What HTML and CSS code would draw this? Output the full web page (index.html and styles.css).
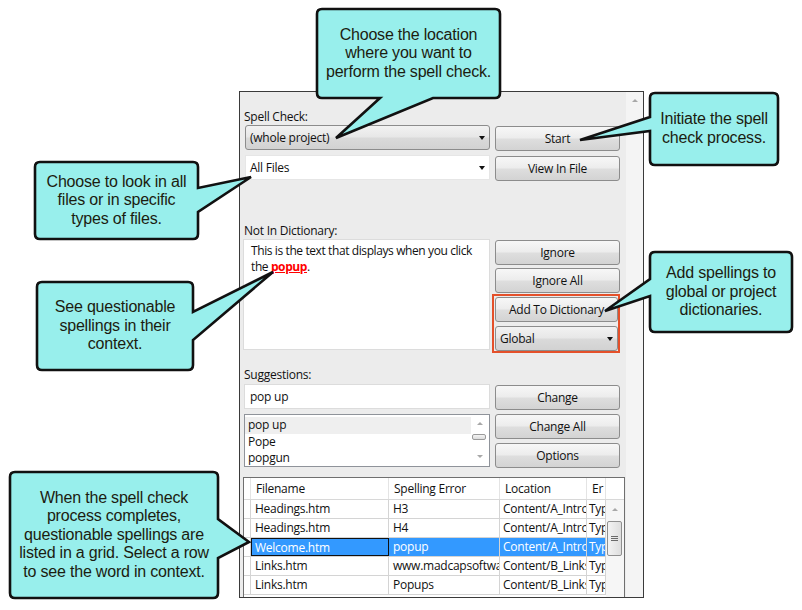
FILE: index.html
```html
<!DOCTYPE html>
<html>
<head>
<meta charset="utf-8">
<link rel="stylesheet" href="styles.css">
</head>
<body>
<div class="stage">
  <div class="panel">
    <div class="content">
      <div class="label first">Spell Check:</div>
      <div class="row">
        <div class="combo gray">(whole project)<span class="caret"></span></div>
        <div class="btn">Start</div>
      </div>
      <div class="row gap5">
        <div class="combo white">All Files<span class="caret"></span></div>
        <div class="btn">View In File</div>
      </div>
      <div class="label nid">Not In Dictionary:</div>
      <div class="row">
        <div class="textarea">This is the text that displays when you click the <span class="bad">popup</span>.</div>
        <div class="btncol">
          <div class="btn">Ignore</div>
          <div class="btn">Ignore All</div>
          <div class="redbox">
            <div class="btn">Add To Dictionary</div>
            <div class="combo gray small">Global<span class="caret"></span></div>
          </div>
        </div>
      </div>
      <div class="label sug">Suggestions:</div>
      <div class="row">
        <div class="textbox">pop up</div>
        <div class="btn">Change</div>
      </div>
      <div class="row gap4">
        <div class="list">
          <div class="items">
            <div class="item hl">pop up</div>
            <div class="item">Pope</div>
            <div class="item">popgun</div>
          </div>
          <div class="lscroll">
            <span class="up"></span>
            <span class="lthumb"></span>
            <span class="down"></span>
          </div>
        </div>
        <div class="btncol tight">
          <div class="btn">Change All</div>
          <div class="btn">Options</div>
        </div>
      </div>
      <div class="grid">
        <div class="gcols">
          <div class="grow ghead">
            <div class="c rh"></div><div class="c c1">Filename</div><div class="c c2">Spelling Error</div><div class="c c3">Location</div><div class="c c4">Er</div>
          </div>
          <div class="grow">
            <div class="c rh"></div><div class="c c1">Headings.htm</div><div class="c c2">H3</div><div class="c c3">Content/A_Intro</div><div class="c c4">Type</div>
          </div>
          <div class="grow">
            <div class="c rh"></div><div class="c c1">Headings.htm</div><div class="c c2">H4</div><div class="c c3">Content/A_Intro</div><div class="c c4">Type</div>
          </div>
          <div class="grow sel">
            <div class="c rh"></div><div class="c c1 focus">Welcome.htm</div><div class="c c2">popup</div><div class="c c3">Content/A_Intro</div><div class="c c4">Type</div>
          </div>
          <div class="grow">
            <div class="c rh"></div><div class="c c1">Links.htm</div><div class="c c2">www.madcapsoftware.com</div><div class="c c3">Content/B_Links</div><div class="c c4">Type</div>
          </div>
          <div class="grow">
            <div class="c rh"></div><div class="c c1">Links.htm</div><div class="c c2">Popups</div><div class="c c3">Content/B_Links</div><div class="c c4">Type</div>
          </div>
        </div>
        <div class="gscroll">
          <div class="gscroll-head"></div>
          <span class="up"></span>
          <span class="gthumb"><i></i><i></i><i></i></span>
        </div>
      </div>
    </div>
    <div class="vscroll"><span class="up"></span></div>
  </div>

  <svg class="shapes" width="802" height="610" viewBox="0 0 802 610">
    <g fill="#98efec" stroke="#111" stroke-width="2.6" stroke-linejoin="miter">
      <path d="M322,9 H495 Q500,9 500,14 V93 Q500,98 495,98 H433 L336,138 L380,98 H322 Q317,98 317,93 V14 Q317,9 322,9 Z"/>
      <path d="M655,93 H773 Q778,93 778,98 V160 Q778,165 773,165 H655 Q650,165 650,160 V131 L580,140 L650,117 V98 Q650,93 655,93 Z"/>
      <path d="M40,162 H193 Q198,162 198,167 V188 L251,177 L198,212 V234 Q198,239 193,239 H40 Q35,239 35,234 V167 Q35,162 40,162 Z"/>
      <path d="M42,282 H188 Q193,282 193,287 V312 L273,272 L193,340 V365 Q193,370 188,370 H42 Q37,370 37,365 V287 Q37,282 42,282 Z"/>
      <path d="M655,252 H787 Q792,252 792,257 V327 Q792,332 787,332 H655 Q650,332 650,327 V296 L605,311 L650,279 V257 Q650,252 655,252 Z"/>
      <path d="M15,472 H213 Q218,472 218,477 V519 L249,542 L218,558 V593 Q218,598 213,598 H15 Q10,598 10,593 V477 Q10,472 15,472 Z"/>
    </g>
  </svg>

  <div class="ctext t1">Choose the location<br>where you want to<br>perform the spell check.</div>
  <div class="ctext t2">Initiate the spell<br>check process.</div>
  <div class="ctext t3">Choose to look in all<br>files or in specific<br>types of files.</div>
  <div class="ctext t4">See questionable<br>spellings in their<br>context.</div>
  <div class="ctext t5">Add spellings to<br>global or project<br>dictionaries.</div>
  <div class="ctext t6">When the spell check<br>process completes,<br>questionable spellings are<br>listed in a grid. Select a row<br>to see the word in context.</div>
</div>
</body>
</html>
```

FILE: styles.css
```css
* { box-sizing: border-box; }
body {
  margin: 0;
  background: #fff;
  font-family: "Open Sans", "Noto Sans", sans-serif;
  font-size: 12px;
  color: #111;
}
.stage {
  position: relative;
  width: 802px;
  height: 610px;
  overflow: hidden;
}
.panel {
  margin: 91px 0 0 239px;
  width: 405px;
  height: 507px;
  border: 1px solid #3a3a3a;
  background: #ececec;
  display: flex;
}
.content {
  width: 386px;
  padding: 17px 0 0 5px;
  overflow: hidden;
  letter-spacing: -0.25px;
}
.label {
  height: 16px;
  line-height: 16px;
  margin-left: -1px;
}
.label.nid { margin-top: 42px; }
.label.sug { margin-top: 14px; margin-bottom: 1px; }
.row {
  display: flex;
  gap: 5px;
  align-items: flex-start;
}
.row.gap5 { margin-top: 4px; }
.row.gap4 { margin-top: 4px; }
.btn {
  width: 125px;
  height: 25px;
  line-height: 23px;
  text-align: center;
  border: 1px solid #8c8c8c;
  border-radius: 3px;
  background: linear-gradient(#f7f7f7, #ececec 48%, #dedede 52%, #d3d3d3);
  flex: none;
}
.row > .btn { margin-top: 1px; }
.combo {
  position: relative;
  width: 245px;
  height: 25px;
  line-height: 23px;
  padding-left: 4px;
  flex: none;
}
.combo.gray {
  border: 1px solid #8c8c8c;
  border-radius: 3px;
  background: linear-gradient(#f2f2f2, #e7e7e7 48%, #dadada 52%, #d2d2d2);
}
.combo.white {
  border: 1px solid #e6e6e6;
  background: #fff;
}
.combo.small { width: 123px; margin-top: 4px; }
.caret {
  position: absolute;
  right: 4px;
  top: 10px;
  width: 0;
  height: 0;
  border-left: 3.5px solid transparent;
  border-right: 3.5px solid transparent;
  border-top: 4px solid #111;
}
.textarea {
  width: 247px;
  height: 111px;
  margin-left: -2px;
  background: #fff;
  border: 1px solid #dcdcdc;
  padding: 3px 1px 0 7px;
  line-height: 16px;
  letter-spacing: -0.4px;
  flex: none;
}
.bad {
  color: #ff0000;
  font-weight: bold;
  text-decoration: underline;
}
.btncol {
  display: flex;
  flex-direction: column;
  gap: 3px;
  margin-top: 1px;
}
.btncol.tight { gap: 4px; margin-top: 0; }
.redbox {
  width: 128px;
  margin-left: -3px;
  margin-top: -2px;
  border: 2px solid #e4502a;
  padding: 1px 1px 0 1px;
}
.redbox .btn { width: 123px; }
.textbox {
  width: 246px;
  height: 25px;
  margin-left: -1px;
  background: #fff;
  border: 1px solid #dcdcdc;
  line-height: 23px;
  padding-left: 5px;
  flex: none;
}
.list {
  width: 246px;
  height: 53px;
  margin-left: -1px;
  background: #fff;
  border: 1px solid #8f939a;
  display: flex;
  flex: none;
}
.items {
  flex: 1;
  padding-top: 2px;
}
.item {
  height: 16.5px;
  line-height: 16px;
  padding-left: 3px;
}
.item.hl { background: #efefef; }
.lscroll {
  position: relative;
  width: 18px;
}
.lscroll .up, .lscroll .down, .vscroll .up, .gscroll .up {
  position: absolute;
  left: 50%;
  margin-left: -3px;
  width: 0;
  height: 0;
  border-left: 3px solid transparent;
  border-right: 3px solid transparent;
}
.lscroll .up { top: 7px; border-bottom: 3px solid #a8a8a8; }
.lscroll .down { bottom: 8px; border-top: 3px solid #a8a8a8; }
.lthumb {
  position: absolute;
  left: 1px;
  width: 14px;
  top: 19px;
  height: 6px;
  border: 1px solid #9a9a9a;
  border-radius: 2px;
  background: linear-gradient(#f4f4f4, #dcdcdc);
}
.grid {
  margin: 9px 0 0 -2px;
  width: 382px;
  height: 125px;
  border: 1px solid #6f6f6f;
  background: #fff;
  display: flex;
}
.gcols { width: 362px; }
.grow {
  display: flex;
  height: 19px;
  border-bottom: 1px solid #d4d4d4;
}
.grow.ghead {
  height: 22px;
  border-bottom: 1px solid #d8d8d8;
}
.c {
  height: 100%;
  border-right: 1px solid #d4d4d4;
  padding-left: 4px;
  line-height: 18px;
  white-space: nowrap;
  overflow: hidden;
  flex: none;
}
.ghead .c { line-height: 21px; border-right-color: #e4e4e4; padding-left: 5px; }
.rh { width: 7px; padding: 0; }
.c1 { width: 138px; }
.c2 { width: 111px; }
.c3 { width: 87px; padding-left: 3px; }
.c4 { width: 19px; padding-left: 2px; }
.sel .c { background: #3399ff; color: #fff; }
.sel .rh { background: #fff; }
.sel .focus { border: 1px solid #111; padding-left: 3px; line-height: 17px; }
.gscroll {
  position: relative;
  width: 18px;
  background: #f6f6f6;
}
.gscroll-head {
  height: 22px;
  background: #fff;
  border-bottom: 1px solid #d8d8d8;
}
.gscroll .up { top: 30px; border-bottom: 3px solid #a8a8a8; }
.gthumb {
  position: absolute;
  left: 1px;
  top: 43px;
  width: 15px;
  height: 35px;
  border: 1px solid #8f8f8f;
  border-radius: 2px;
  background: linear-gradient(90deg, #f3f3f3, #dedede);
  display: flex;
  flex-direction: column;
  justify-content: center;
  align-items: center;
  gap: 1px;
}
.gthumb i {
  display: block;
  width: 7px;
  height: 1px;
  background: #6a6a6a;
}
.vscroll {
  position: relative;
  width: 17px;
  background: #f4f4f4;
}
.vscroll .up { top: 7px; border-bottom: 3px solid #a8a8a8; }
.shapes {
  position: absolute;
  left: 0;
  top: 0;
}
.ctext {
  position: absolute;
  display: flex;
  align-items: center;
  justify-content: center;
  text-align: center;
  font-family: "Liberation Sans", Arial, sans-serif;
  font-size: 16px;
  line-height: 18.6px;
  letter-spacing: -0.2px;
  color: #1c1c10;
}
.t1 { left: 317px; top: 9px; width: 183px; height: 89px; }
.t2 { left: 650px; top: 93px; width: 128px; height: 72px; }
.t3 { left: 35px; top: 162px; width: 163px; height: 77px; }
.t4 { left: 37px; top: 282px; width: 156px; height: 88px; }
.t5 { left: 650px; top: 252px; width: 142px; height: 80px; }
.t6 { left: 10px; top: 472px; width: 208px; height: 126px; }
```
